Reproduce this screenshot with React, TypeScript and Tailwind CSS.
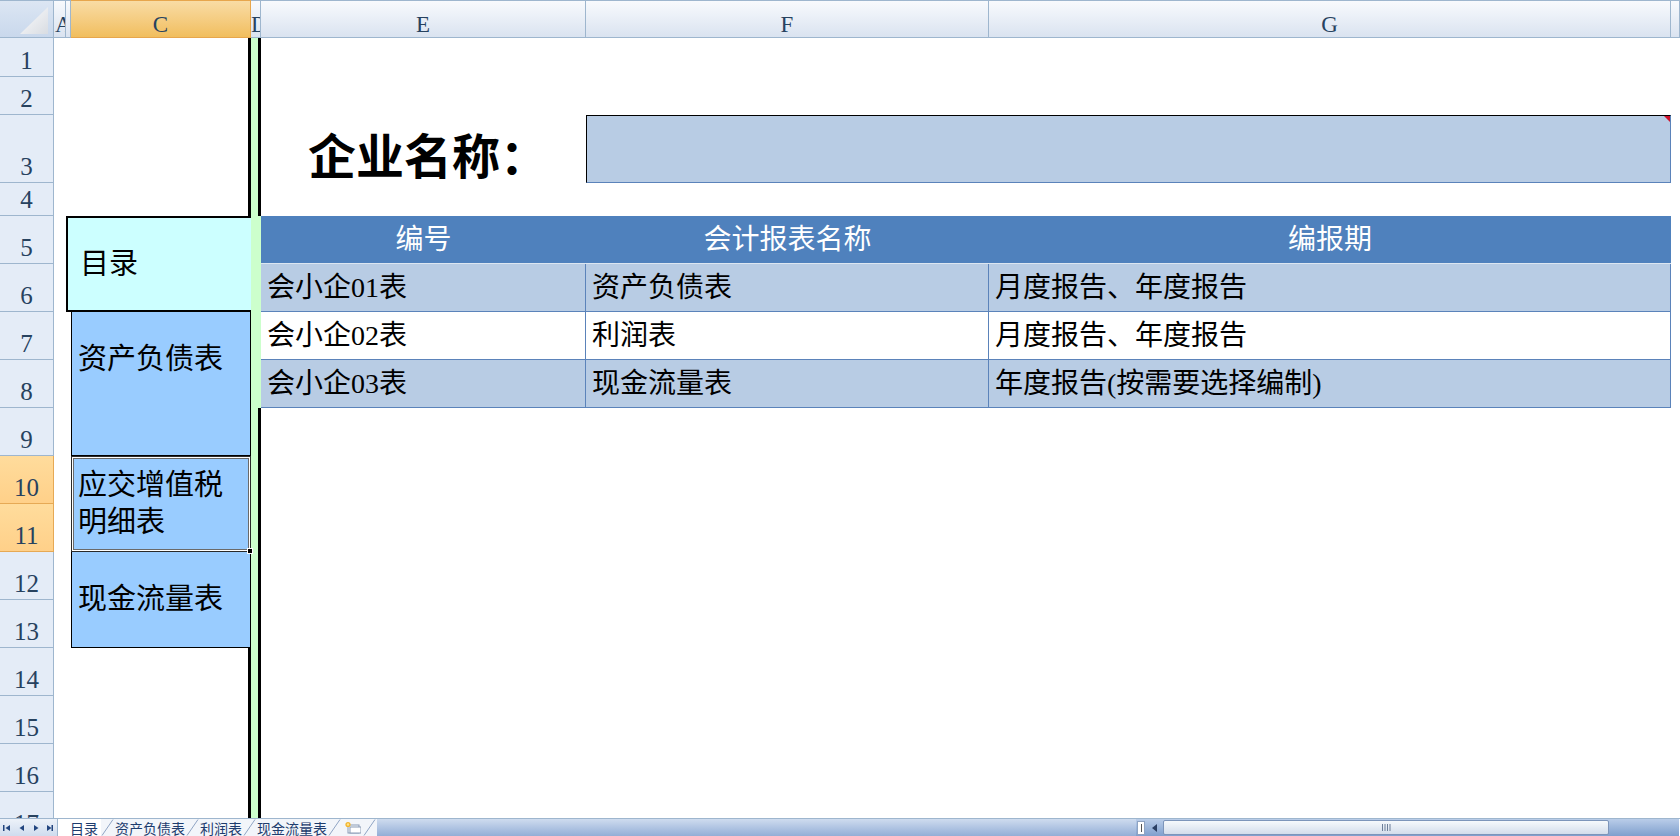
import React from 'react';

const serif = "font-['Liberation_Serif','Noto_Sans_CJK_SC',serif]";

const rowHeads = [
  { n: 1, h: 'h-[39px]' },
  { n: 2, h: 'h-[38px]' },
  { n: 3, h: 'h-[68px]' },
  { n: 4, h: 'h-[33px]' },
  { n: 5, h: 'h-[48px]' },
  { n: 6, h: 'h-[48px]' },
  { n: 7, h: 'h-[48px]' },
  { n: 8, h: 'h-[48px]' },
  { n: 9, h: 'h-[48px]' },
  { n: 10, h: 'h-[48px]', sel: true },
  { n: 11, h: 'h-[48px]', sel: true },
  { n: 12, h: 'h-[48px]' },
  { n: 13, h: 'h-[48px]' },
  { n: 14, h: 'h-[48px]' },
  { n: 15, h: 'h-[48px]' },
  { n: 16, h: 'h-[48px]' },
  { n: 17, h: 'h-[48px]' },
];

const colHeads = [
  { label: 'A', w: 'w-[12px]', align: 'justify-start pl-px' },
  { label: '', w: 'w-[5px]', align: 'justify-center' },
  { label: 'C', w: 'w-[180px]', align: 'justify-center', sel: true },
  { label: 'D', w: 'w-[10px]', align: 'justify-start' },
  { label: 'E', w: 'w-[325px]', align: 'justify-center' },
  { label: 'F', w: 'w-[403px]', align: 'justify-center' },
  { label: 'G', w: 'w-[682px]', align: 'justify-center' },
  { label: '', w: 'w-[9px]', align: 'justify-center' },
];

const reports = [
  { code: '会小企01表', name: '资产负债表', period: '月度报告、年度报告', bg: 'bg-[#B8CCE4]' },
  { code: '会小企02表', name: '利润表', period: '月度报告、年度报告', bg: 'bg-white' },
  { code: '会小企03表', name: '现金流量表', period: '年度报告(按需要选择编制)', bg: 'bg-[#B8CCE4]' },
];

const tabs = ['目录', '资产负债表', '利润表', '现金流量表'];

function Slash() {
  return (
    <svg width="13" height="17" viewBox="0 0 13 17" className="shrink-0">
      <line x1="1" y1="16.5" x2="12" y2="0.5" stroke="#8FA4C4" strokeWidth="1" />
    </svg>
  );
}

function NavArrows() {
  return (
    <div className="flex w-[58px] shrink-0 items-center gap-[8px] border-r border-[#9EB6CE] bg-gradient-to-b from-[#EDF2F9] to-[#CFDCEE] pl-[3px]">
      <svg width="7" height="8" viewBox="0 0 7 8" fill="#22457F">
        <rect x="0" y="1" width="1.5" height="6" />
        <path d="M7 1 L2.5 4 L7 7Z" />
      </svg>
      <svg width="7" height="8" viewBox="0 0 7 8" fill="#22457F">
        <path d="M6 1 L1.5 4 L6 7Z" />
      </svg>
      <svg width="6" height="8" viewBox="0 0 6 8" fill="#22457F">
        <path d="M1 1 L5.5 4 L1 7Z" />
      </svg>
      <svg width="6" height="8" viewBox="0 0 6 8" fill="#22457F">
        <path d="M0 1 L4.5 4 L0 7Z" />
        <rect x="4.5" y="1" width="1.5" height="6" />
      </svg>
    </div>
  );
}

function SheetTabs() {
  return (
    <div className="flex w-[319px] shrink-0 items-center bg-[#F2F5FA] font-['Noto_Sans_CJK_SC',sans-serif] text-[14px] leading-none text-[#1D3C6E]">
      <div className="flex h-full items-center bg-white pl-[12px] pr-[3px]">{tabs[0]}</div>
      {tabs.slice(1).map((t) => (
        <React.Fragment key={t}>
          <Slash />
          <div className="flex h-full items-center px-[1px]">{t}</div>
        </React.Fragment>
      ))}
      <Slash />
      <svg width="17" height="13" viewBox="0 0 17 13" className="ml-[3px] shrink-0">
        <rect x="4" y="4" width="11" height="8" fill="#F6F8FB" stroke="#8A9BB5" />
        <rect x="6" y="6" width="11" height="6" fill="#FFFFFF" stroke="#8A9BB5" />
        <circle cx="4" cy="3.5" r="2.6" fill="#F2B530" />
        <circle cx="4" cy="3.5" r="1.2" fill="#FFE58A" />
      </svg>
      <div className="ml-[2px]">
        <Slash />
      </div>
    </div>
  );
}

function HScroll() {
  return (
    <div className="flex w-[543px] shrink-0 items-center bg-gradient-to-b from-[#BACDE9] to-[#7F9FCD]">
      <div className="ml-px flex h-[14px] w-[8px] items-center justify-center border border-[#8EA3C2] bg-white">
        <div className="h-[8px] w-px bg-[#555]" />
      </div>
      <div className="flex w-[18px] justify-center">
        <svg width="5" height="8" viewBox="0 0 5 8" fill="#2A3F63">
          <path d="M5 0 L0 4 L5 8Z" />
        </svg>
      </div>
      <div className="flex h-[15px] w-[446px] items-center justify-center rounded-[2px] border border-[#7D95BA] bg-gradient-to-b from-[#F6F9FC] to-[#D3DDEB]">
        <svg width="9" height="7" viewBox="0 0 9 7" stroke="#6D7F99" strokeWidth="1">
          <line x1="0.5" y1="0" x2="0.5" y2="7" />
          <line x1="3" y1="0" x2="3" y2="7" />
          <line x1="5.5" y1="0" x2="5.5" y2="7" />
          <line x1="8" y1="0" x2="8" y2="7" />
        </svg>
      </div>
    </div>
  );
}

export default function App() {
  return (
    <div className={`flex h-[836px] w-[1680px] flex-col overflow-hidden bg-white ${serif}`}>
      {/* column header */}
      <div className="flex h-[38px] shrink-0">
        <div className="relative flex w-[54px] shrink-0 border-t border-r border-b border-[#9EB6CE] bg-gradient-to-b from-[#DCE6F3] to-[#C9D8EC]">
          <svg width="53" height="36" viewBox="0 0 53 36" className="absolute left-0 top-0">
            <defs>
              <linearGradient id="corner" x1="0" y1="0" x2="1" y2="1">
                <stop offset="0" stopColor="#FDFDFE" />
                <stop offset="1" stopColor="#D8DCE2" />
              </linearGradient>
            </defs>
            <polygon points="48,6 48,33 20,33" fill="url(#corner)" />
          </svg>
        </div>
        {colHeads.map((c, i) => (
          <div
            key={i}
            className={`${c.w} flex shrink-0 items-end overflow-hidden border-t border-r border-b pb-px text-[23px] leading-none text-[#27425F] ${c.align} ${
              c.sel
                ? 'border-[#E7A64C] bg-gradient-to-b from-[#F9DCA4] to-[#F1BE5D]'
                : 'border-[#9EB6CE] bg-gradient-to-b from-[#F8FAFD] to-[#DAE3F0]'
            }`}
          >
            {c.label}
          </div>
        ))}
      </div>

      <div className="flex h-[780px] shrink-0 overflow-hidden">
        {/* row header */}
        <div className="flex w-[54px] shrink-0 flex-col">
          {rowHeads.map((r) => (
            <div
              key={r.n}
              className={`${r.h} flex shrink-0 items-end justify-center border-r border-b pb-[3px] text-[25px] leading-none text-[#27425F] ${
                r.sel ? 'border-[#E6A955] bg-gradient-to-b from-[#FFDC9C] to-[#FFD089]' : 'border-[#9EB6CE] bg-[#E4ECF7]'
              }`}
            >
              {r.n}
            </div>
          ))}
        </div>

        {/* sheet */}
        <div className="grid grid-cols-[12px_5px_180px_10px_325px_403px_682px_9px] grid-rows-[39px_38px_68px_33px_repeat(12,48px)_26px] overflow-hidden">
          {/* column C, rows 1-4 */}
          <div className="col-start-3 row-span-4 row-start-1 border-r-[3px] border-black" />

          {/* 目录 */}
          <div className="col-span-2 col-start-2 row-span-2 row-start-5 flex items-center border-t-2 border-b-2 border-l-2 border-black bg-[#CCFFFF] pl-[12px] text-[29px] leading-none text-black">
            目录
          </div>

          {/* 资产负债表 */}
          <div className="col-start-3 row-span-3 row-start-7 border-r border-b border-l border-black bg-[#99CCFF] text-[29px] leading-none text-black">
            <div className="flex h-[95px] items-center pl-[6px]">资产负债表</div>
          </div>

          {/* 应交增值税明细表 (selected) */}
          <div className="relative col-start-3 row-span-2 row-start-10 flex flex-col justify-center border border-[#2A2A2A] bg-[#99CCFF] pl-[6px] text-[29px] leading-[37px] text-black shadow-[inset_0_0_0_1px_#ffffff,inset_0_0_0_2px_#6A6A6A]">
            <div>应交增值税</div>
            <div>明细表</div>
            <div className="absolute -right-[3px] -bottom-[3px] h-[6px] w-[6px] border border-white bg-black" />
          </div>

          {/* 现金流量表 */}
          <div className="col-start-3 row-span-2 row-start-12 flex items-center border-r border-b border-l border-black bg-[#99CCFF] pl-[6px] text-[29px] leading-none text-black">
            现金流量表
          </div>

          {/* column C, rows 14-17 */}
          <div className="col-start-3 row-span-4 row-start-14 border-r-[3px] border-black" />

          {/* column D */}
          <div className="col-start-4 row-span-4 row-start-1 border-r-[3px] border-black bg-[#CCFFCC]" />
          <div className="col-start-4 row-span-4 row-start-5 bg-[#CCFFCC]" />
          <div className="col-start-4 row-span-9 row-start-9 border-r-[3px] border-black bg-[#CCFFCC]" />

          {/* 企业名称 */}
          <div className="col-start-5 row-start-3 flex items-end pb-[6px] pl-[47px] font-['Noto_Sans_CJK_SC',sans-serif] text-[48px] font-bold leading-none text-black">
            企业名称：
          </div>
          <div className="relative col-span-2 col-start-6 row-start-3 border-t border-l border-black border-r border-b border-r-[#5B83BA] border-b-[#5B83BA] bg-[#B8CCE4]">
            <div className="absolute top-0 right-0 h-0 w-0 border-t-[6px] border-l-[6px] border-t-[#D0102A] border-l-transparent" />
          </div>

          {/* report table */}
          <div className="col-span-3 col-start-5 row-span-4 row-start-5 grid grid-cols-[325px_403px_682px] grid-rows-[repeat(4,48px)] text-[28px] leading-none">
            <div className="flex items-center justify-center border-b border-[#DCE6F1] bg-[#4F81BD] text-white">编号</div>
            <div className="flex items-center justify-center border-b border-[#DCE6F1] bg-[#4F81BD] text-white">会计报表名称</div>
            <div className="flex items-center justify-center border-b border-[#DCE6F1] bg-[#4F81BD] text-white">编报期</div>
            {reports.map((r) => (
              <React.Fragment key={r.code}>
                <div className={`${r.bg} flex items-center whitespace-nowrap border-r border-b border-[#5B83BA] pl-[6px] text-black`}>{r.code}</div>
                <div className={`${r.bg} flex items-center whitespace-nowrap border-r border-b border-[#5B83BA] pl-[6px] text-black`}>{r.name}</div>
                <div className={`${r.bg} flex items-center whitespace-nowrap border-r border-b border-[#5B83BA] pl-[6px] text-black`}>{r.period}</div>
              </React.Fragment>
            ))}
          </div>
        </div>
      </div>

      {/* sheet tab bar */}
      <div className="flex h-[18px] shrink-0 border-t border-[#9EB6CE]">
        <NavArrows />
        <SheetTabs />
        <div className="w-[759px] shrink-0 bg-gradient-to-b from-[#CFDCEF] to-[#93AED6]" />
        <HScroll />
      </div>
    </div>
  );
}
